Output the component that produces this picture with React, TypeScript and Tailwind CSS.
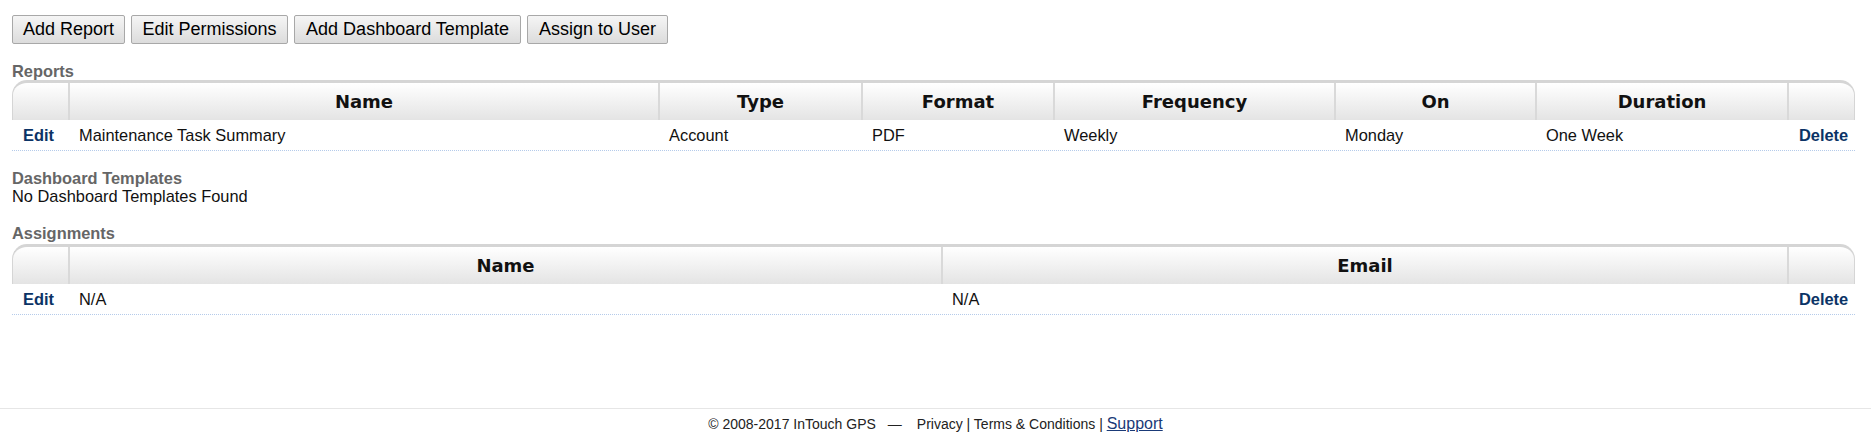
import React from "react";

const sans = { fontFamily: '"Liberation Sans", Arial, sans-serif' };

function HeaderRow({ cols, labels }: { cols: string; labels: string[] }) {
  return (
    <div
      className={`grid ${cols} h-[40px] rounded-t-[15px] border-t-[3px] border-x border-[#d5d5d5] bg-linear-to-b from-[#ffffff] to-[#e4e4e4] overflow-hidden`}
    >
      {labels.map((l, i) => (
        <div
          key={i}
          className={`flex items-center justify-center h-full pb-[1px] text-[18px] font-bold text-[#111] ${
            i > 0 ? "border-l-2 border-[#d9d9d9]" : ""
          }`}
          style={{ fontFamily: '"DejaVu Sans", Verdana, sans-serif' }}
        >
          {l}
        </div>
      ))}
    </div>
  );
}

function DataRow({ cols, cells }: { cols: string; cells: string[] }) {
  return (
    <div
      className={`grid ${cols} h-[31px] items-center border-b border-dotted border-[#b5cbea] text-[16.4px] text-[#111]`}
      style={sans}
    >
      <a className="pl-[11px] font-bold text-[#0b3366] cursor-pointer">Edit</a>
      {cells.map((c, i) => (
        <div key={i} className="pl-[10px] whitespace-nowrap">
          {c}
        </div>
      ))}
      <a className="pl-[11px] font-bold text-[#0b3366] cursor-pointer">Delete</a>
    </div>
  );
}

function Label({ children, className = "" }: { children: React.ReactNode; className?: string }) {
  return (
    <div className={`text-[16.4px] leading-[18px] font-bold text-[#666] ${className}`} style={sans}>
      {children}
    </div>
  );
}

export default function App() {
  const reportHead = "grid-cols-[55px_590px_203px_192px_281px_201px_252px_67px]";
  const reportCols = "grid-cols-[57px_590px_203px_192px_281px_201px_252px_67px]";
  const assignHead = "grid-cols-[55px_873px_846px_67px]";
  const assignCols = "grid-cols-[57px_873px_846px_67px]";
  const btn =
    "h-[29px] rounded-[2px] border border-[#a8a8a8] bg-linear-to-b from-[#f5f5f5] to-[#dcdcdc] text-[18px] text-black flex items-center justify-center";
  return (
    <div className="w-[1871px] h-[436px] bg-white" style={sans}>
      <div className="pl-[12px] pr-[16px] pt-[15px]">
        <div className="flex">
          <button className={`${btn} w-[113px]`}>Add Report</button>
          <button className={`${btn} w-[157px] ml-[6px]`}>Edit Permissions</button>
          <button className={`${btn} w-[227px] ml-[6px]`}>Add Dashboard Template</button>
          <button className={`${btn} w-[141px] ml-[6px]`}>Assign to User</button>
        </div>

        <Label className="mt-[18px]">Reports</Label>
        <div>
          <HeaderRow
            cols={reportHead}
            labels={["", "Name", "Type", "Format", "Frequency", "On", "Duration", ""]}
          />
          <DataRow
            cols={reportCols}
            cells={["Maintenance Task Summary", "Account", "PDF", "Weekly", "Monday", "One Week"]}
          />
        </div>

        <Label className="mt-[18px]">Dashboard Templates</Label>
        <div className="text-[16.4px] leading-[18px] text-[#111]">No Dashboard Templates Found</div>

        <Label className="mt-[19px]">Assignments</Label>
        <div className="mt-[2px]">
          <HeaderRow cols={assignHead} labels={["", "Name", "Email", ""]} />
          <DataRow cols={assignCols} cells={["N/A", "N/A"]} />
        </div>
      </div>

      <div className="mt-[93px] border-t border-[#e6e6e6] pt-[5px] flex justify-center items-baseline text-[14px] text-[#222] whitespace-pre">
        <span>© 2008-2017 InTouch GPS</span>
        <span className="ml-[12px] mr-[15px]">—</span>
        <span>Privacy | Terms &amp; Conditions | </span>
        <a className="text-[16px] leading-[18px] text-[#1a3a78] underline cursor-pointer">Support</a>
      </div>
    </div>
  );
}
